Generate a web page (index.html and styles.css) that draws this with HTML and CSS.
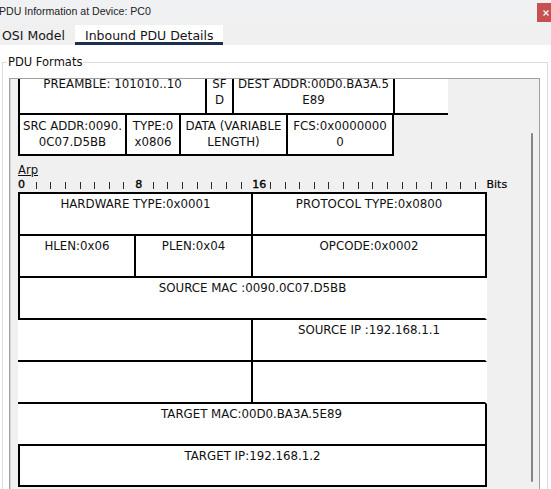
FILE: index.html
```html
<!DOCTYPE html>
<html>
<head>
<meta charset="utf-8">
<link rel="stylesheet" href="styles.css">
</head>
<body>
<div class="titlebar">
  <span class="title">PDU Information at Device: PC0</span>
  <span class="close"><svg width="6" height="6" viewBox="0 0 6 6"><path d="M0.5 0.5L5.5 5.5M5.5 0.5L0.5 5.5" stroke="#fff" stroke-width="1.3"/></svg></span>
</div>
<div class="tabs">
  <span class="tab">OSI Model</span>
  <span class="tab active">Inbound PDU Details</span>
</div>
<div class="content">
  <fieldset class="group">
    <legend>PDU Formats</legend>
    <div class="scroller">
      <div class="scroll-content">
        <div class="eth">
          <div class="erow r1">
            <div class="ec l w-pre">PREAMBLE: 101010..10</div>
            <div class="ec w-sfd">SF<br>D</div>
            <div class="ec w-dst">DEST ADDR:00D0.BA3A.5<br>E89</div>
            <div class="ec nr w-pad"></div>
          </div>
          <div class="erow r2">
            <div class="ec l w-src">SRC ADDR:0090.<br>0C07.D5BB</div>
            <div class="ec w-type">TYPE:0<br>x0806</div>
            <div class="ec w-data">DATA (VARIABLE<br>LENGTH)</div>
            <div class="ec w-fcs">FCS:0x0000000<br>0</div>
          </div>
        </div>
        <div class="proto">Arp</div>
        <div class="ruler">
          <span class="slot num">0</span>
          <span class="slot"><i></i></span><span class="slot"><i></i></span><span class="slot"><i></i></span><span class="slot"><i></i></span><span class="slot"><i></i></span><span class="slot"><i></i></span><span class="slot"><i></i></span>
          <span class="slot num">8</span>
          <span class="slot"><i></i></span><span class="slot"><i></i></span><span class="slot"><i></i></span><span class="slot"><i></i></span><span class="slot"><i></i></span><span class="slot"><i></i></span><span class="slot"><i></i></span>
          <span class="slot num">16</span>
          <span class="slot"><i></i></span><span class="slot"><i></i></span><span class="slot"><i></i></span><span class="slot"><i></i></span><span class="slot"><i></i></span><span class="slot"><i></i></span><span class="slot"><i></i></span><span class="slot"><i></i></span><span class="slot"><i></i></span><span class="slot"><i></i></span><span class="slot"><i></i></span><span class="slot"><i></i></span><span class="slot"><i></i></span><span class="slot"><i></i></span><span class="slot"><i></i></span>
          <span class="bits">Bits</span>
        </div>
        <div class="arp">
          <div class="c s2 l top">HARDWARE TYPE:0x0001</div>
          <div class="c s2 top">PROTOCOL TYPE:0x0800</div>
          <div class="c l">HLEN:0x06</div>
          <div class="c">PLEN:0x04</div>
          <div class="c s2">OPCODE:0x0002</div>
          <div class="c s4 l nr">SOURCE MAC :0090.0C07.D5BB</div>
          <div class="c s2"></div>
          <div class="c s2 nr">SOURCE IP :192.168.1.1</div>
          <div class="c s2"></div>
          <div class="c s2 nr"></div>
          <div class="c s4">TARGET MAC:00D0.BA3A.5E89</div>
          <div class="c s4 l last">TARGET IP:192.168.1.2</div>
        </div>
      </div>
      <div class="thumb"></div>
    </div>
  </fieldset>
</div>
</body>
</html>
```

FILE: styles.css
```css
* { box-sizing: border-box; }
html, body { margin: 0; padding: 0; }
body {
  width: 551px;
  height: 489px;
  overflow: hidden;
  background: #fff;
  font-family: "DejaVu Sans", "Liberation Sans", sans-serif;
  color: #111;
}

.titlebar {
  height: 22px;
  background: #f0f1f3;
  display: flex;
  justify-content: space-between;
  align-items: flex-start;
}
.title {
  font-family: "Liberation Sans", Arial, sans-serif;
  font-size: 10.6px;
  line-height: 12px;
  margin-top: 5px;
  margin-left: -1px;
  color: #222;
}
.close {
  width: 14px;
  height: 19px;
  margin-top: 3px;
  background: #c75050;
  display: flex;
  align-items: center;
  padding-left: 6px;
}
.close svg { display: block; }

.tabs {
  height: 23px;
  background: #f0f0f0;
  display: flex;
  align-items: flex-end;
  font-size: 12.5px;
  color: #141414;
}
.tab {
  height: 20px;
  padding-top: 4px;
  line-height: 14px;
  border-bottom: 3px solid transparent;
  white-space: nowrap;
}
.tab:first-child { width: 75px; padding-left: 2px; }
.tab.active {
  width: 148px;
  padding-left: 10px;
  background: #fff;
  border-bottom-color: #1c2f4f;
}

.content {
  padding: 10px 3px 0 2px;
}
.group {
  margin: 0;
  padding: 9px 7px 0 6px;
  border: 1px solid #dcdcdc;
  border-bottom: none;
  min-width: 0;
  height: 434px;
  overflow: hidden;
}
.group legend {
  font-size: 11.5px;
  line-height: 14px;
  padding: 0 1px;
  margin-left: -2px;
  color: #111;
}

.scroller {
  position: relative;
  height: 411px;
  overflow: hidden;
  background: #f0f0f0;
  border: 1px solid #a0a0a0;
  border-bottom: none;
  box-shadow: inset 1px 0 0 #d4d4d4;
  padding-left: 8px;
}
.scroll-content {
  margin-top: -8px;
}
.thumb {
  position: absolute;
  left: 521px;
  top: 54px;
  width: 2px;
  height: 349px;
  background: #858585;
  border-radius: 1px;
}

/* Ethernet frame */
.erow { display: flex; }
.ec {
  background: #fff;
  border-right: 2px solid #000;
  border-bottom: 2px solid #000;
  text-align: center;
  font-size: 11.8px;
  line-height: 16px;
  padding-top: 3px;
  white-space: nowrap;
}
.ec.l { border-left: 2px solid #000; }
.ec.nr { border-right: none; }
.r1 .ec { height: 44px; border-top: 2px solid #000; }
.r2 .ec { height: 41px; }
.w-pre { width: 189px; }
.w-sfd { width: 27px; }
.w-dst { width: 161px; }
.w-pad { width: 53px; }
.w-src { width: 109px; }
.w-type { width: 54px; }
.w-data { width: 107px; }
.w-fcs { width: 106px; }

.proto {
  margin-top: 7px;
  font-size: 11.6px;
  line-height: 14px;
  text-decoration: underline;
}

.ruler {
  display: flex;
  height: 15px;
  line-height: 15px;
  font-size: 11px;
  color: #000;
  -webkit-text-stroke: 0.35px #000;
}
.slot {
  flex: 0 0 14.65px;
  width: 14.65px;
}
.slot i {
  display: block;
  width: 1px;
  height: 7px;
  margin-left: 3px;
  margin-top: 5px;
  background: #2a2a2a;
}
.bits { -webkit-text-stroke: 0.2px #000; }

/* ARP */
.arp {
  display: grid;
  grid-template-columns: 118px 117px 117px 117px;
  width: 469px;
}
.c {
  background: #fff;
  height: 42px;
  border-right: 2px solid #000;
  border-bottom: 2px solid #000;
  text-align: center;
  font-size: 11.8px;
  line-height: 16px;
  padding-top: 2px;
  white-space: nowrap;
}
.c.l { border-left: 2px solid #000; }
.c.nr { border-right-color: transparent; }
.c.top { border-top: 2px solid #000; height: 44px; }
.c.last { height: 41px; }
.s2 { grid-column: span 2; }
.s4 { grid-column: span 4; }
```
